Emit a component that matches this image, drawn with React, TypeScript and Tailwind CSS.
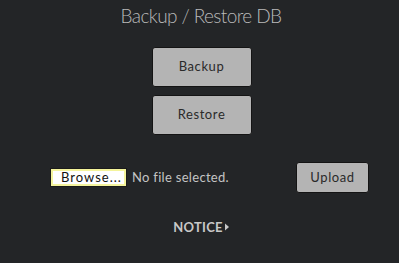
import React from "react";

export default function App() {
  return (
    <div
      className="w-[399px] h-[263px] bg-[#232527] flex flex-col items-center overflow-hidden"
      style={{ fontFamily: "Lato, 'Open Sans', sans-serif" }}
    >
      <h1 className="mt-[4px] text-[19px] leading-[24px] font-light tracking-[-0.6px] text-[#bababa] pl-[3px]">
        Backup / Restore DB
      </h1>
      <div className="mt-[19px] flex flex-col gap-[8px] pl-[4px]">
        <button className="w-[100px] h-[40px] bg-[#b4b4b4] border border-[#141414] rounded-[3px] text-[13px] tracking-[0.6px] text-[#2a2a2a]">
          Backup
        </button>
        <button className="w-[100px] h-[40px] bg-[#b4b4b4] border border-[#141414] rounded-[3px] text-[13px] tracking-[0.6px] text-[#2a2a2a]">
          Restore
        </button>
      </div>
      <div className="mt-[27px] w-full flex items-center pl-[50px] pr-[30px]">
        <div className="flex items-center">
          <div className="h-[19px] w-[77px] border border-[#1a1a1a] bg-[#f4f49c] p-[2px]">
            <div className="w-full h-full bg-white flex items-center pl-[8px] text-[13px] leading-none tracking-[1px] text-[#111]">
              Browse...
            </div>
          </div>
          <span className="ml-[5px] text-[13px] tracking-[0.3px] text-[#c4c4c4]">
            No file selected.
          </span>
        </div>
        <button className="ml-auto w-[73px] h-[31px] bg-[#b4b4b4] border border-[#141414] rounded-[3px] text-[13px] tracking-[0.6px] text-[#2a2a2a]">
          Upload
        </button>
      </div>
      <div className="mt-[26px] flex items-center pl-[4px] text-[13px] font-bold leading-[16px] tracking-[0.3px] text-[#c8c8c8]">
        NOTICE
        <svg width="6" height="8" viewBox="0 0 6 8" className="ml-[1px]">
          <path d="M1 0.5 L5 4 L1 7.5 Z" fill="#c8c8c8" />
        </svg>
      </div>
    </div>
  );
}
